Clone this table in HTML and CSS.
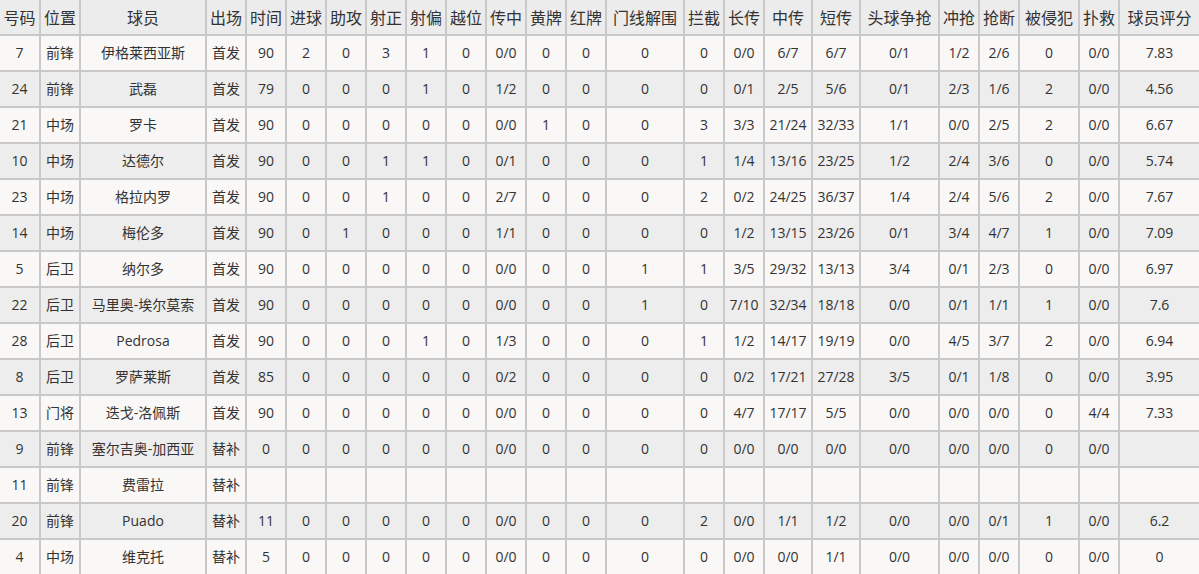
FILE: index.html
```html
<!DOCTYPE html>
<html lang="zh-CN">
<head>
<meta charset="utf-8">
<title>球员数据</title>
<link rel="stylesheet" href="styles.css">
</head>
<body>
<table class="stats">
  <colgroup>
    <col class="w41"><col class="w40"><col class="w126"><col class="w40"><col class="w40">
    <col class="w40"><col class="w40"><col class="w40"><col class="w40"><col class="w40">
    <col class="w40"><col class="w40"><col class="w40"><col class="w78"><col class="w40">
    <col class="w40"><col class="w48"><col class="w48"><col class="w79"><col class="w40">
    <col class="w40"><col class="w60"><col class="w40"><col class="w81">
  </colgroup>
  <thead>
    <tr>
      <th>号码</th><th>位置</th><th>球员</th><th>出场</th><th>时间</th><th>进球</th><th>助攻</th><th>射正</th><th>射偏</th><th>越位</th><th>传中</th><th>黄牌</th><th>红牌</th><th>门线解围</th><th>拦截</th><th>长传</th><th>中传</th><th>短传</th><th>头球争抢</th><th>冲抢</th><th>抢断</th><th>被侵犯</th><th>扑救</th><th>球员评分</th>
    </tr>
  </thead>
  <tbody>
    <tr><td>7</td><td>前锋</td><td>伊格莱西亚斯</td><td>首发</td><td>90</td><td>2</td><td>0</td><td>3</td><td>1</td><td>0</td><td>0/0</td><td>0</td><td>0</td><td>0</td><td>0</td><td>0/0</td><td>6/7</td><td>6/7</td><td>0/1</td><td>1/2</td><td>2/6</td><td>0</td><td>0/0</td><td>7.83</td></tr>
    <tr><td>24</td><td>前锋</td><td>武磊</td><td>首发</td><td>79</td><td>0</td><td>0</td><td>0</td><td>1</td><td>0</td><td>1/2</td><td>0</td><td>0</td><td>0</td><td>0</td><td>0/1</td><td>2/5</td><td>5/6</td><td>0/1</td><td>2/3</td><td>1/6</td><td>2</td><td>0/0</td><td>4.56</td></tr>
    <tr><td>21</td><td>中场</td><td>罗卡</td><td>首发</td><td>90</td><td>0</td><td>0</td><td>0</td><td>0</td><td>0</td><td>0/0</td><td>1</td><td>0</td><td>0</td><td>3</td><td>3/3</td><td>21/24</td><td>32/33</td><td>1/1</td><td>0/0</td><td>2/5</td><td>2</td><td>0/0</td><td>6.67</td></tr>
    <tr><td>10</td><td>中场</td><td>达德尔</td><td>首发</td><td>90</td><td>0</td><td>0</td><td>1</td><td>1</td><td>0</td><td>0/1</td><td>0</td><td>0</td><td>0</td><td>1</td><td>1/4</td><td>13/16</td><td>23/25</td><td>1/2</td><td>2/4</td><td>3/6</td><td>0</td><td>0/0</td><td>5.74</td></tr>
    <tr><td>23</td><td>中场</td><td>格拉内罗</td><td>首发</td><td>90</td><td>0</td><td>0</td><td>1</td><td>0</td><td>0</td><td>2/7</td><td>0</td><td>0</td><td>0</td><td>2</td><td>0/2</td><td>24/25</td><td>36/37</td><td>1/4</td><td>2/4</td><td>5/6</td><td>2</td><td>0/0</td><td>7.67</td></tr>
    <tr><td>14</td><td>中场</td><td>梅伦多</td><td>首发</td><td>90</td><td>0</td><td>1</td><td>0</td><td>0</td><td>0</td><td>1/1</td><td>0</td><td>0</td><td>0</td><td>0</td><td>1/2</td><td>13/15</td><td>23/26</td><td>0/1</td><td>3/4</td><td>4/7</td><td>1</td><td>0/0</td><td>7.09</td></tr>
    <tr><td>5</td><td>后卫</td><td>纳尔多</td><td>首发</td><td>90</td><td>0</td><td>0</td><td>0</td><td>0</td><td>0</td><td>0/0</td><td>0</td><td>0</td><td>1</td><td>1</td><td>3/5</td><td>29/32</td><td>13/13</td><td>3/4</td><td>0/1</td><td>2/3</td><td>0</td><td>0/0</td><td>6.97</td></tr>
    <tr><td>22</td><td>后卫</td><td>马里奥-埃尔莫索</td><td>首发</td><td>90</td><td>0</td><td>0</td><td>0</td><td>0</td><td>0</td><td>0/0</td><td>0</td><td>0</td><td>1</td><td>0</td><td>7/10</td><td>32/34</td><td>18/18</td><td>0/0</td><td>0/1</td><td>1/1</td><td>1</td><td>0/0</td><td>7.6</td></tr>
    <tr><td>28</td><td>后卫</td><td>Pedrosa</td><td>首发</td><td>90</td><td>0</td><td>0</td><td>0</td><td>1</td><td>0</td><td>1/3</td><td>0</td><td>0</td><td>0</td><td>1</td><td>1/2</td><td>14/17</td><td>19/19</td><td>0/0</td><td>4/5</td><td>3/7</td><td>2</td><td>0/0</td><td>6.94</td></tr>
    <tr><td>8</td><td>后卫</td><td>罗萨莱斯</td><td>首发</td><td>85</td><td>0</td><td>0</td><td>0</td><td>0</td><td>0</td><td>0/2</td><td>0</td><td>0</td><td>0</td><td>0</td><td>0/2</td><td>17/21</td><td>27/28</td><td>3/5</td><td>0/1</td><td>1/8</td><td>0</td><td>0/0</td><td>3.95</td></tr>
    <tr><td>13</td><td>门将</td><td>迭戈-洛佩斯</td><td>首发</td><td>90</td><td>0</td><td>0</td><td>0</td><td>0</td><td>0</td><td>0/0</td><td>0</td><td>0</td><td>0</td><td>0</td><td>4/7</td><td>17/17</td><td>5/5</td><td>0/0</td><td>0/0</td><td>0/0</td><td>0</td><td>4/4</td><td>7.33</td></tr>
    <tr><td>9</td><td>前锋</td><td>塞尔吉奥-加西亚</td><td>替补</td><td>0</td><td>0</td><td>0</td><td>0</td><td>0</td><td>0</td><td>0/0</td><td>0</td><td>0</td><td>0</td><td>0</td><td>0/0</td><td>0/0</td><td>0/0</td><td>0/0</td><td>0/0</td><td>0/0</td><td>0</td><td>0/0</td><td></td></tr>
    <tr><td>11</td><td>前锋</td><td>费雷拉</td><td>替补</td><td></td><td></td><td></td><td></td><td></td><td></td><td></td><td></td><td></td><td></td><td></td><td></td><td></td><td></td><td></td><td></td><td></td><td></td><td></td><td></td></tr>
    <tr><td>20</td><td>前锋</td><td>Puado</td><td>替补</td><td>11</td><td>0</td><td>0</td><td>0</td><td>0</td><td>0</td><td>0/0</td><td>0</td><td>0</td><td>0</td><td>2</td><td>0/0</td><td>1/1</td><td>1/2</td><td>0/0</td><td>0/0</td><td>0/1</td><td>1</td><td>0/0</td><td>6.2</td></tr>
    <tr><td>4</td><td>中场</td><td>维克托</td><td>替补</td><td>5</td><td>0</td><td>0</td><td>0</td><td>0</td><td>0</td><td>0/0</td><td>0</td><td>0</td><td>0</td><td>0</td><td>0/0</td><td>0/0</td><td>1/1</td><td>0/0</td><td>0/0</td><td>0/0</td><td>0</td><td>0/0</td><td>0</td></tr>
  </tbody>
</table>
</body>
</html>
```

FILE: styles.css
```css
html, body {
  margin: 0;
  padding: 0;
  background: #f9f8f7;
  overflow: hidden;
}

.stats {
  table-layout: fixed;
  width: 1200px;
  border-collapse: separate;
  border-spacing: 0;
  font-family: "Open Sans", "Noto Sans CJK SC", sans-serif;
  color: #333;
}

.w40 { width: 40px; }
.w41 { width: 41px; }
.w48 { width: 48px; }
.w60 { width: 60px; }
.w78 { width: 78px; }
.w79 { width: 79px; }
.w81 { width: 81px; }
.w126 { width: 126px; }

.stats th,
.stats td {
  box-sizing: border-box;
  height: 36px;
  padding: 0;
  border-right: 2px solid #c9c9c9;
  border-bottom: 2px solid #c9c9c9;
  text-align: center;
  vertical-align: middle;
  white-space: nowrap;
  overflow: hidden;
}

.stats th {
  font-weight: normal;
  font-size: 16px;
  background: #ececec;
}

.stats td {
  font-size: 14px;
  padding-bottom: 2px;
}

.stats tbody tr:nth-child(odd) td {
  background: #f9f8f7;
}

.stats tbody tr:nth-child(even) td {
  background: #ededed;
}
```
